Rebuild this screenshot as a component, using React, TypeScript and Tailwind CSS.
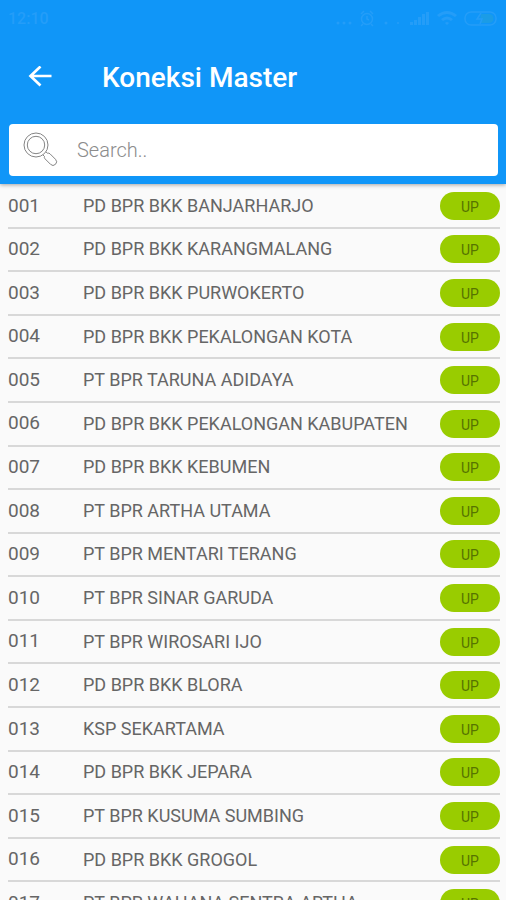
import React from 'react';

interface Connection {
  code: string;
  name: string;
}

const connections: Connection[] = [
  { code: '001', name: 'PD BPR BKK BANJARHARJO' },
  { code: '002', name: 'PD BPR BKK KARANGMALANG' },
  { code: '003', name: 'PD BPR BKK PURWOKERTO' },
  { code: '004', name: 'PD BPR BKK PEKALONGAN KOTA' },
  { code: '005', name: 'PT BPR TARUNA ADIDAYA' },
  { code: '006', name: 'PD BPR BKK PEKALONGAN KABUPATEN' },
  { code: '007', name: 'PD BPR BKK KEBUMEN' },
  { code: '008', name: 'PT BPR ARTHA UTAMA' },
  { code: '009', name: 'PT BPR MENTARI TERANG' },
  { code: '010', name: 'PT BPR SINAR GARUDA' },
  { code: '011', name: 'PT BPR WIROSARI IJO' },
  { code: '012', name: 'PD BPR BKK BLORA' },
  { code: '013', name: 'KSP SEKARTAMA' },
  { code: '014', name: 'PD BPR BKK JEPARA' },
  { code: '015', name: 'PT BPR KUSUMA SUMBING' },
  { code: '016', name: 'PD BPR BKK GROGOL' },
  { code: '017', name: 'PT BPR WAHANA SENTRA ARTHA' },
];

const StatusBar: React.FC = () => (
  <div className="flex h-[38px] items-center justify-between px-2 text-[#249df8]">
    <span className="text-base font-medium">12:10</span>
    <svg className="h-5 w-[166px]" viewBox="0 0 166 20" fill="none" stroke="currentColor" strokeWidth="1.5" aria-hidden="true">
      <g fill="currentColor" stroke="none">
        <circle cx="6" cy="14" r="1.5" />
        <circle cx="12" cy="14" r="1.5" />
        <circle cx="18" cy="14" r="1.5" />
        <circle cx="54" cy="14" r="1.5" />
        <circle cx="66" cy="14" r="1" />
        <path d="M78 13h3v3h-3zM82 11h3v5h-3zM86 8h3v8h-3zM90 5h3v11h-3zM94 3h3v13h-3z" />
        <path d="M105 6q10-8 20 0l-2 2q-8-6-16 0zM109 10q6-5 12 0l-2 2q-4-3-8 0zM113 14q2-2 4 0l-2 2z" />
      </g>
      <circle cx="35" cy="10" r="5.5" />
      <path d="M35 7v3l2 1M29 5l3-3M41 5l-3-3M31 15l-2 2M39 15l2 2" />
      <rect x="133" y="3" width="31" height="13" rx="6" />
      <path d="M149 5h8a4.500 4.500 0 0 1 0 9h-9z" fill="#1b9ce6" stroke="none" />
      <path d="M149 4l-4 6h5l-2 5" />
    </svg>
  </div>
);

const SearchIcon: React.FC = () => (
  <svg className="size-9 shrink-0" viewBox="0 0 36 36" fill="none" stroke="#858585" strokeWidth="1" aria-hidden="true">
    <circle cx="13" cy="13" r="12" />
    <circle cx="13" cy="13" r="8.7" />
    <path d="M20 23l1.500 1.500q-.6 1 .5 2.300l5.500 5.500a3.500 3.500 0 0 0 5-5l-5.500-5.500q-1.300-1.100-2.300-.5L23 20" />
  </svg>
);

const ConnectionRow: React.FC<Connection> = ({ code, name }) => (
  <li className="flex items-center border-b-2 border-[#d8d8d8]">
    <span className="w-[75px] shrink-0 text-[19px]">{code}</span>
    <span className="flex-1 truncate text-lg">{name}</span>
    <button
      type="button"
      className="h-7 w-[60px] shrink-0 rounded-full bg-[#99cc00] pt-0.5 text-sm text-[#567300]"
    >
      UP
    </button>
  </li>
);

export default function App() {
  return (
    <div className="flex h-screen flex-col overflow-hidden bg-[#fafafa] font-['Roboto',sans-serif]">
      <header className="z-10 shrink-0 bg-[#1096f8] pb-2 shadow-[0_1px_4px_rgba(0,0,0,0.35)]">
        <StatusBar />
        <div className="flex h-20 items-center px-7">
          <button type="button" aria-label="Back" className="mr-[50px] text-white">
            <svg className="size-6" viewBox="0 0 24 24" fill="none" stroke="currentColor" strokeWidth="2.7" aria-hidden="true">
              <path d="M23.500 10H3M12.500 0.500L2.500 10L12.500 19.500" />
            </svg>
          </button>
          <h1 className="text-[28px] font-medium text-white">Koneksi Master</h1>
        </div>
        <label className="mr-2 ml-[9px] mt-1.5 flex h-[52px] items-center gap-[18px] rounded bg-white px-[14px]">
          <SearchIcon />
          <input
            type="text"
            aria-label="Search"
            placeholder="Search.."
            className="min-w-0 flex-1 bg-transparent text-xl font-light text-[#555555] outline-none placeholder:text-[#8c8c8c]"
          />
        </label>
      </header>
      <main className="min-h-0 flex-1 overflow-y-auto [scrollbar-width:none]">
        <ul className="grid min-h-[742px] auto-rows-fr pt-px pr-1.5 pl-2 text-[#666666]">
          {connections.map((item) => (
            <ConnectionRow key={item.code} code={item.code} name={item.name} />
          ))}
        </ul>
      </main>
    </div>
  );
}
